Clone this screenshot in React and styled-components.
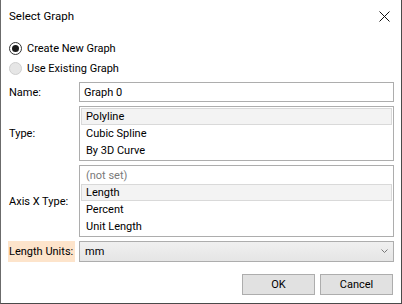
import React from "react";
import styled, { createGlobalStyle } from "styled-components";

const Global = createGlobalStyle`
  html, body { margin: 0; padding: 0; background: #ffffff; }
  body { font-family: Roboto, "Noto Sans", sans-serif; font-size: 11px; color: #000; }
  * { box-sizing: border-box; }
`;

const Dialog = styled.div`
  width: 402px;
  height: 304px;
  background: #fff;
  border-left: 1px solid #6b6b6b;
  border-right: 1px solid #4a4a4a;
  border-bottom: 1px solid #4a4a4a;
  display: flex;
  flex-direction: column;
  overflow: hidden;
  & > * { flex-shrink: 0; }
`;

const TitleBar = styled.div`
  height: 32px;
  display: flex;
  align-items: center;
  justify-content: space-between;
  padding: 0 8px 0 8px;
`;

const Title = styled.div`
  font-size: 11.5px;
  line-height: 16px;
`;

const CloseBtn = styled.div`
  width: 14px;
  height: 14px;
  display: flex;
  align-items: center;
  justify-content: center;
  margin-right: 2px;
`;

const Body = styled.div`
  display: flex;
  flex-direction: column;
  padding: 6px 7px 0 8px;
`;

const RadioRow = styled.div`
  display: flex;
  align-items: center;
  height: 20px;
  gap: 5px;
  white-space: nowrap;
`;

const RadioCircle = styled.span`
  width: 13px;
  height: 13px;
  border-radius: 50%;
  border: 1px solid ${p => (p.disabled ? "#cfcfcf" : "#333")};
  background: ${p => (p.disabled ? "#e6e6e6" : "#fff")};
  display: flex;
  align-items: center;
  justify-content: center;
  &::after {
    content: "";
    width: 7px;
    height: 7px;
    border-radius: 50%;
    background: ${p => (p.checked ? "#1a1a1a" : "transparent")};
  }
`;

const Form = styled.div`
  display: grid;
  grid-template-columns: 70px 1fr;
  row-gap: 4px;
  margin-top: 4px;
`;

const Label = styled.div`
  display: flex;
  align-items: center;
  white-space: nowrap;
  padding-left: 0;
  ${p => p.highlight && `
    background: #fde4cb;
    margin-left: -1px;
    margin-right: 4px;
    padding-left: 1px;
  `}
`;

const TextInput = styled.div`
  height: 20px;
  border: 1px solid #adadad;
  display: flex;
  align-items: center;
  padding-left: 4px;
`;

const ListBox = styled.div`
  border: 1px solid #adadad;
  padding: 1px;
  display: flex;
  flex-direction: column;
`;

const ListItem = styled.div`
  height: 17px;
  display: flex;
  align-items: center;
  padding-left: 4px;
  color: ${p => (p.muted ? "#7a7a7a" : "#000")};
  background: ${p => (p.selected ? "#f3f3f3" : "transparent")};
  border: 1px solid ${p => (p.selected ? "#d9d9d9" : "transparent")};
`;

const Combo = styled.div`
  height: 21px;
  border: 1px solid #adadad;
  background: linear-gradient(#f0f0f0, #e5e5e5);
  display: flex;
  align-items: center;
  justify-content: space-between;
  padding: 0 5px 0 5px;
`;

const Footer = styled.div`
  display: flex;
  justify-content: flex-end;
  gap: 5px;
  padding: 12px 8px 0 0;
`;

const Button = styled.div`
  width: 73px;
  height: 21px;
  background: #e1e1e1;
  border: 1px solid #adadad;
  display: flex;
  align-items: center;
  justify-content: center;
`;

export default function App() {
  return (
    <>
      <Global />
      <Dialog>
        <TitleBar>
          <Title>Select Graph</Title>
          <CloseBtn>
            <svg width="11" height="11" viewBox="0 0 11 11">
              <path d="M0.5 0.5 L10.5 10.5 M10.5 0.5 L0.5 10.5" stroke="#111" strokeWidth="1" fill="none" />
            </svg>
          </CloseBtn>
        </TitleBar>
        <Body>
          <RadioRow>
            <RadioCircle checked />
            <span>Create New Graph</span>
          </RadioRow>
          <RadioRow>
            <RadioCircle disabled />
            <span>Use Existing Graph</span>
          </RadioRow>
          <Form>
            <Label>Name:</Label>
            <TextInput>Graph 0</TextInput>
            <Label>Type:</Label>
            <ListBox>
              <ListItem selected>Polyline</ListItem>
              <ListItem>Cubic Spline</ListItem>
              <ListItem>By 3D Curve</ListItem>
            </ListBox>
            <Label>Axis X Type:</Label>
            <ListBox>
              <ListItem muted>(not set)</ListItem>
              <ListItem selected>Length</ListItem>
              <ListItem>Percent</ListItem>
              <ListItem>Unit Length</ListItem>
            </ListBox>
            <Label highlight>Length Units:</Label>
            <Combo>
              <span>mm</span>
              <svg width="7" height="5" viewBox="0 0 7 5">
                <path d="M0.5 0.5 L3.5 3.5 L6.5 0.5" stroke="#777" strokeWidth="1" fill="none" />
              </svg>
            </Combo>
          </Form>
        </Body>
        <Footer>
          <Button>OK</Button>
          <Button>Cancel</Button>
        </Footer>
      </Dialog>
    </>
  );
}
